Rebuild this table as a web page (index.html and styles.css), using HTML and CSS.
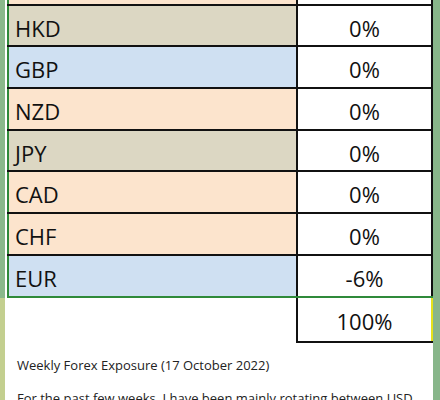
FILE: index.html
```html
<!DOCTYPE html>
<html>
<head>
<meta charset="utf-8">
<title>Weekly Forex Exposure</title>
<link rel="stylesheet" href="styles.css">
</head>
<body>
<div class="shell">
  <div class="gutter"></div>
  <main class="page">
    <table class="fx">
      <tr class="peach"><td class="cur">SGD</td><td class="pct">0%</td></tr>
      <tr class="tan"><td class="cur">HKD</td><td class="pct">0%</td></tr>
      <tr class="blue"><td class="cur">GBP</td><td class="pct">0%</td></tr>
      <tr class="peach"><td class="cur">NZD</td><td class="pct">0%</td></tr>
      <tr class="tan"><td class="cur">JPY</td><td class="pct">0%</td></tr>
      <tr class="peach"><td class="cur">CAD</td><td class="pct">0%</td></tr>
      <tr class="peach"><td class="cur">CHF</td><td class="pct">0%</td></tr>
      <tr class="blue last"><td class="cur">EUR</td><td class="pct">-6%</td></tr>
      <tr class="total"><td class="blank"></td><td class="pct">100%</td></tr>
    </table>
    <p class="post">Weekly Forex Exposure (17 October 2022)</p>
    <p class="post">For the past few weeks, I have been mainly rotating between USD and SGD as my main currencies.</p>
  </main>
</div>
</body>
</html>
```

FILE: styles.css
```css
html, body {
  margin: 0;
  padding: 0;
}
body {
  background: #88b68a;
  overflow: hidden;
}
.shell {
  display: flex;
  align-items: stretch;
}
.gutter {
  width: 5px;
  flex: none;
  background: linear-gradient(to bottom, #8ab88b 0, #8ab88b 298px, #c3cf8f 298px, #c3cf8f 100%);
}
.page {
  width: 428px;
  flex: none;
  background: #ffffff;
  padding-left: 2px;
  box-sizing: border-box;
}
.fx {
  border-collapse: collapse;
  margin-top: -38px;
  width: 426px;
  font-family: "Open Sans", "Liberation Sans", sans-serif;
  font-size: 22px;
  font-weight: 500;
  color: #111;
}
.fx td {
  border: 2px solid #111;
  height: 41.7px;
  padding: 4px 0 0 0;
  box-sizing: border-box;
  line-height: 1;
}
.fx .cur {
  width: 289px;
  padding-left: 6px;
  border-left-color: #2f8a3a;
}
.fx .pct {
  text-align: center;
  background: #ffffff;
}
.peach .cur { background: #fce4cd; }
.tan .cur { background: #dcd7c3; }
.blue .cur { background: #cfe0f2; }
.last td {
  border-bottom-color: #2f8a3a;
}
.total td {
  height: 45px;
}
.total .blank {
  border: none;
  background: #fff;
}
.total .pct {
  border-right-color: #e6e21a;
}
.post {
  font-family: "Open Sans", "Liberation Sans", sans-serif;
  font-size: 13px;
  line-height: 18px;
  color: #222;
  margin: 13px 0 15px;
  padding-left: 10px;
  padding-right: 8px;
}
```
